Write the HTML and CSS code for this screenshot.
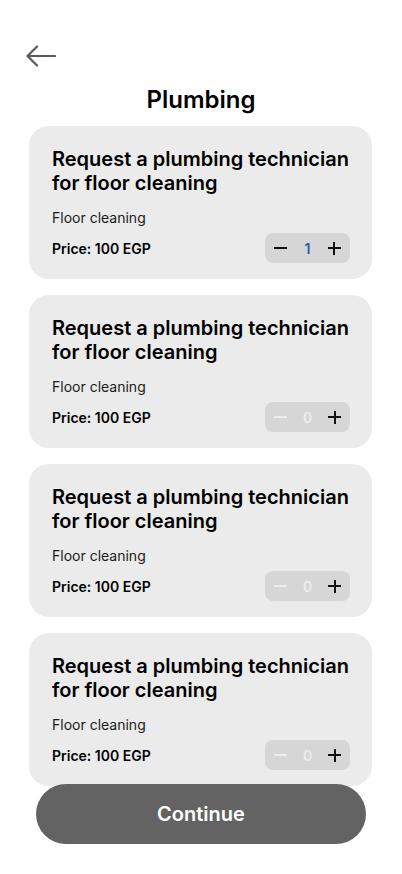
FILE: index.html
```html
<!DOCTYPE html>
<html lang="en">
<head>
<meta charset="utf-8">
<title>Plumbing</title>
<link rel="stylesheet" href="styles.css">
</head>
<body>
<div class="page">
  <header class="top">
    <button class="back" aria-label="Back">
      <svg width="30" height="22" viewBox="0 0 30 22" fill="none" stroke="#5a5a5a" stroke-width="2.2" stroke-linecap="round" stroke-linejoin="round"><path d="M29 11H2M11 1.5L1.5 11L11 20.5"/></svg>
    </button>
    <h1 class="title">Plumbing</h1>
  </header>
  <main class="list">
    <section class="card">
      <h2 class="card-title">Request a plumbing technician for floor cleaning</h2>
      <p class="card-sub">Floor cleaning</p>
      <div class="card-row">
        <span class="price">Price: 100 EGP</span>
        <div class="stepper">
          <span class="step minus"></span>
          <span class="count active">1</span>
          <span class="step plus"></span>
        </div>
      </div>
    </section>
    <section class="card">
      <h2 class="card-title">Request a plumbing technician for floor cleaning</h2>
      <p class="card-sub">Floor cleaning</p>
      <div class="card-row">
        <span class="price">Price: 100 EGP</span>
        <div class="stepper">
          <span class="step minus disabled"></span>
          <span class="count">0</span>
          <span class="step plus"></span>
        </div>
      </div>
    </section>
    <section class="card">
      <h2 class="card-title">Request a plumbing technician for floor cleaning</h2>
      <p class="card-sub">Floor cleaning</p>
      <div class="card-row">
        <span class="price">Price: 100 EGP</span>
        <div class="stepper">
          <span class="step minus disabled"></span>
          <span class="count">0</span>
          <span class="step plus"></span>
        </div>
      </div>
    </section>
    <section class="card">
      <h2 class="card-title">Request a plumbing technician for floor cleaning</h2>
      <p class="card-sub">Floor cleaning</p>
      <div class="card-row">
        <span class="price">Price: 100 EGP</span>
        <div class="stepper">
          <span class="step minus disabled"></span>
          <span class="count">0</span>
          <span class="step plus"></span>
        </div>
      </div>
    </section>
  </main>
  <button class="continue">Continue</button>
</div>
</body>
</html>
```
FILE: styles.css
```css
* { box-sizing: border-box; }
html, body { margin: 0; padding: 0; background: #fff; }
body { font-family: Inter, "Noto Sans", "Liberation Sans", sans-serif; color: #000; }
.page {
  width: 402px;
  height: 874px;
  display: flex;
  flex-direction: column;
  overflow: hidden;
}
.top {
  padding: 45px 0 0 0;
  display: flex;
  flex-direction: column;
}
.back {
  margin-left: 26px;
  width: 31px;
  height: 22px;
  padding: 0;
  border: 0;
  background: none;
  display: flex;
}
.title {
  margin: 19px 0 0 0;
  text-align: center;
  font-size: 24px;
  line-height: 28px;
  font-weight: 600;
}
.list {
  margin-top: 12px;
  padding: 0 30px 0 29px;
  display: flex;
  flex-direction: column;
  gap: 16px;
}
.card {
  background: #ebebeb;
  border-radius: 20px;
  padding: 21px 22px 16px 23px;
  height: 153px;
  flex-shrink: 0;
}
.card-title {
  margin: 0;
  font-size: 20px;
  line-height: 24px;
  font-weight: 600;
}
.card-sub {
  margin: 15px 0 0 0;
  font-size: 14px;
  line-height: 16px;
  color: #1a1a1a;
}
.card-row {
  margin-top: 7px;
  display: flex;
  align-items: center;
  justify-content: space-between;
}
.price {
  font-size: 14px;
  font-weight: 600;
}
.stepper {
  width: 85px;
  height: 30px;
  background: #d6d6d6;
  border-radius: 8px;
  display: flex;
  align-items: center;
  justify-content: space-between;
  padding: 0 9px;
}
.step {
  width: 13px;
  height: 13px;
  position: relative;
}
.step::before, .plus::after {
  content: "";
  position: absolute;
  left: 0;
  top: 5.5px;
  width: 13px;
  height: 2px;
  background: #111;
}
.plus::after {
  left: 5.5px;
  top: 0;
  width: 2px;
  height: 13px;
}
.minus.disabled::before { background: #ececec; }
.count {
  font-size: 14px;
  font-weight: 600;
  color: #ececec;
}
.count.active { color: #1e5fb0; }
.continue {
  position: relative;
  margin: -2px 36px 0 36px;
  height: 60px;
  border: 0;
  border-radius: 30px;
  background: #636363;
  color: #fff;
  font-family: Inter, "Noto Sans", "Liberation Sans", sans-serif;
  font-size: 20px;
  font-weight: 600;
  flex-shrink: 0;
}
```
